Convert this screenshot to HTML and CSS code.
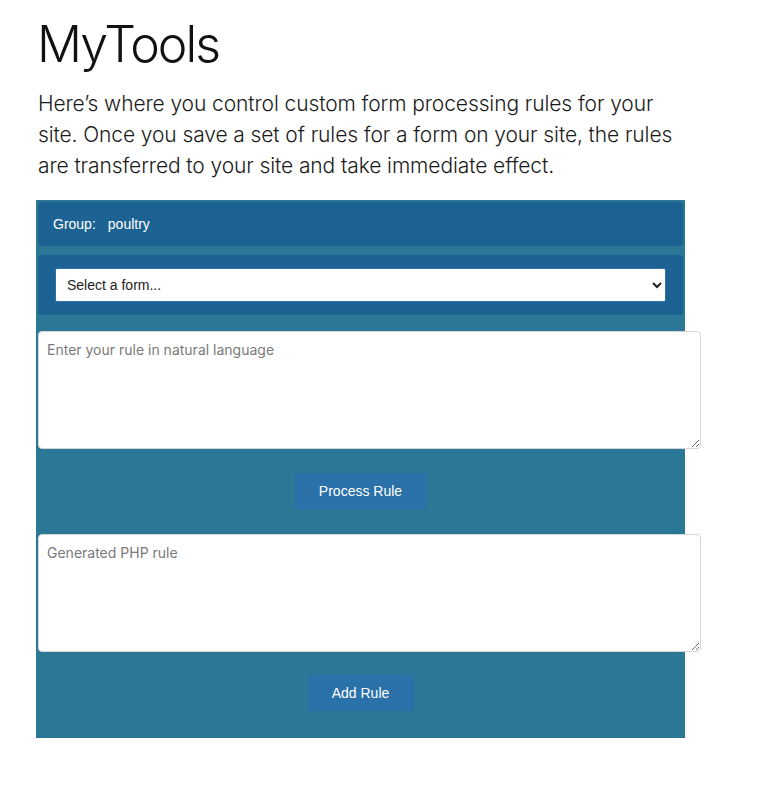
FILE: index.html
```html
<!DOCTYPE html>
<html lang="en">
<head>
<meta charset="utf-8">
<title>MyTools</title>
<link rel="stylesheet" href="styles.css">
</head>
<body>
<main class="page">
  <h1 class="title">MyTools</h1>
  <p class="intro">Here’s where you control custom form processing rules for your site. Once you save a set of rules for a form on your site, the rules are transferred to your site and take immediate effect.</p>
  <section class="panel">
    <div class="box group-box">
      <span class="group-label">Group:</span>
      <span class="group-name">poultry</span>
    </div>
    <div class="box select-box">
      <select class="form-select">
        <option>Select a form...</option>
      </select>
    </div>
    <textarea class="rule-text first" placeholder="Enter your rule in natural language"></textarea>
    <div class="actions">
      <button class="btn btn-process" type="button">Process Rule</button>
    </div>
    <textarea class="rule-text" placeholder="Generated PHP rule"></textarea>
    <div class="actions last">
      <button class="btn btn-add" type="button">Add Rule</button>
    </div>
  </section>
</main>
</body>
</html>
```

FILE: styles.css
```css
html, body {
  margin: 0;
  padding: 0;
  background: #ffffff;
}

.page {
  padding: 0 0 0 36px;
  width: 649px;
}

.title {
  margin: 0;
  padding-top: 16px;
  padding-left: 1px;
  font-family: "Inter", "Noto Sans", sans-serif;
  font-weight: 300;
  font-size: 50px;
  line-height: 56px;
  color: #111111;
  letter-spacing: -2px;
}

.intro {
  margin: 16px 0 19px 2px;
  width: 650px;
  font-family: "Inter", "Noto Sans", sans-serif;
  font-weight: 300;
  font-size: 21px;
  line-height: 31px;
  color: #1a1a1a;
  letter-spacing: -0.1px;
}

.panel {
  background: #2a7895;
  padding: 2px 2px 27px 2px;
  display: flex;
  flex-direction: column;
}

.box {
  background: #1c6293;
  border-radius: 3px;
}

.group-box {
  height: 44px;
  display: flex;
  align-items: center;
  padding-left: 15px;
  font-family: "Liberation Sans", Arial, sans-serif;
  font-size: 14px;
  color: #ffffff;
}

.group-label {
  margin-right: 12px;
}

.select-box {
  margin-top: 9px;
  height: 60px;
  display: flex;
  align-items: center;
  padding: 0 17px;
}

.form-select {
  width: 100%;
  height: 34px;
  border: 1px solid #2f73a8;
  border-radius: 2px;
  background: #ffffff;
  font-family: "Liberation Sans", Arial, sans-serif;
  font-size: 14px;
  color: #222222;
  padding: 0 7px;
}

.rule-text {
  display: block;
  width: 100%;
  height: 100px;
  box-sizing: content-box;
  padding: 8px;
  border: 1px solid #d6d6d6;
  border-radius: 4px;
  background: #ffffff;
  font-family: "Inter", "Noto Sans", sans-serif;
  font-size: 14px;
  line-height: 20px;
  color: #333333;
  resize: vertical;
  margin: 0;
}

.rule-text.first {
  margin-top: 16px;
}

.rule-text::placeholder {
  color: #7a7a7a;
  opacity: 1;
}

.actions {
  display: flex;
  justify-content: center;
  padding: 24px 0 25px;
}

.actions.last {
  padding: 23px 0 0;
}

.btn {
  height: 36px;
  border: none;
  background: #2a70a9;
  color: #ffffff;
  font-family: "Liberation Sans", Arial, sans-serif;
  font-size: 14px;
  border-radius: 0;
  cursor: pointer;
}

.btn-process {
  width: 132px;
}

.btn-add {
  width: 106px;
}
```
